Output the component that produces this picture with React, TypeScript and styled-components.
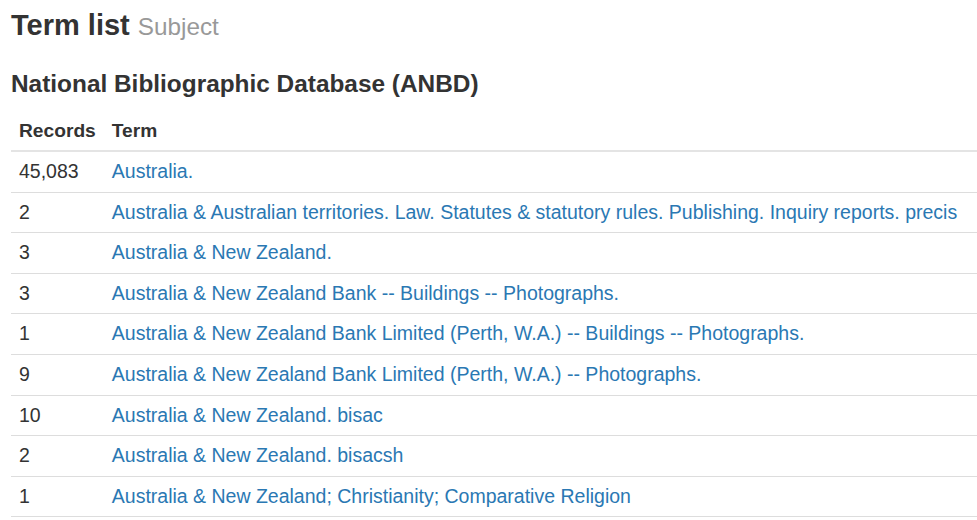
import { createGlobalStyle, styled } from 'styled-components';

type Row = {
  records: string;
  term: string;
};

const rows: Row[] = [
  { records: '45,083', term: 'Australia.' },
  {
    records: '2',
    term: 'Australia & Australian territories. Law. Statutes & statutory rules. Publishing. Inquiry reports. precis',
  },
  { records: '3', term: 'Australia & New Zealand.' },
  { records: '3', term: 'Australia & New Zealand Bank -- Buildings -- Photographs.' },
  { records: '1', term: 'Australia & New Zealand Bank Limited (Perth, W.A.) -- Buildings -- Photographs.' },
  { records: '9', term: 'Australia & New Zealand Bank Limited (Perth, W.A.) -- Photographs.' },
  { records: '10', term: 'Australia & New Zealand. bisac' },
  { records: '2', term: 'Australia & New Zealand. bisacsh' },
  { records: '1', term: 'Australia & New Zealand; Christianity; Comparative Religion' },
];

const App = () => {
  return (
    <Page>
      <GlobalStyle />
      <Title>
        Term list <Small>Subject</Small>
      </Title>
      <SubTitle>National Bibliographic Database (ANBD)</SubTitle>
      <Table>
        <thead>
          <tr>
            <HeadCell>Records</HeadCell>
            <HeadCell>Term</HeadCell>
          </tr>
        </thead>
        <tbody>
          {rows.map((row, index) => (
            <tr key={index}>
              <Cell>{row.records}</Cell>
              <Cell>
                <TermLink href="#">{row.term}</TermLink>
              </Cell>
            </tr>
          ))}
        </tbody>
      </Table>
    </Page>
  );
};

export default App;

const GlobalStyle = createGlobalStyle`
  body {
    margin: 0;
    background: #fff;
    font-family: "Liberation Sans", Arial, sans-serif;
    color: #333;
  }
`;

const Page = styled.div`
  padding: 0 0 0 11px;
  width: 1000px;
`;

const Title = styled.h1`
  margin: 0;
  padding-top: 7px;
  font-size: 29px;
  font-weight: bold;
  line-height: 36px;
  color: #333;
`;

const Small = styled.small`
  font-size: 24.3px;
  font-weight: normal;
  color: #999;
`;

const SubTitle = styled.h2`
  margin: 24px 0 0;
  font-size: 24.4px;
  font-weight: bold;
  line-height: 30px;
  color: #333;
`;

const Table = styled.table`
  margin-top: 19px;
  border-collapse: collapse;
  border-spacing: 0;
  width: 1000px;
  font-size: 19.5px;
`;

const HeadCell = styled.th`
  text-align: left;
  padding: 0 8px 6px;
  font-size: 19.2px;
  font-weight: bold;
  line-height: 26px;
  border-bottom: 2px solid #e4e4e4;
  white-space: nowrap;
  width: 1px;

  & + & {
    width: auto;
  }
`;

const Cell = styled.td`
  padding: 8px 8px;
  line-height: 23.6px;
  border-bottom: 1px solid #ddd;
  white-space: nowrap;
`;

const TermLink = styled.a`
  color: #2a78b3;
  text-decoration: none;
`;
